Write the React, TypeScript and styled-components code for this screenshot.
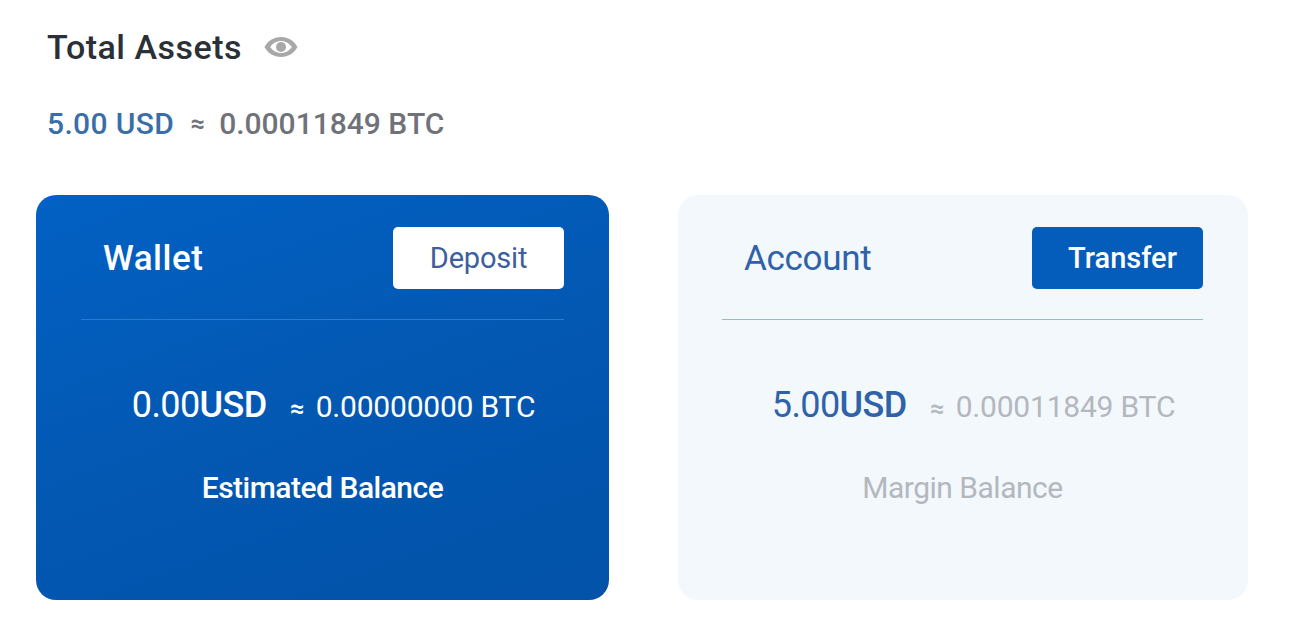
import React from 'react';
import styled, { createGlobalStyle, css } from 'styled-components';

const GlobalStyle = createGlobalStyle`
  html, body {
    margin: 0;
    padding: 0;
    background: #fff;
    font-family: Roboto, "Liberation Sans", sans-serif;
  }
`;

const Page = styled.div`
  width: 1293px;
  height: 630px;
  padding: 28px 0 0 36px;
  box-sizing: border-box;
  overflow: hidden;
`;

const Heading = styled.div`
  display: flex;
  align-items: center;
  gap: 22px;
  padding-left: 11px;
  height: 38px;
`;

const Title = styled.h1`
  margin: 0;
  font-size: 34px;
  font-weight: 500;
  color: #2b2f36;
  letter-spacing: 0.5px;
`;

const Summary = styled.div`
  display: flex;
  align-items: center;
  padding-left: 11px;
  margin-top: 38px;
  height: 38px;
  font-size: 30px;
  font-weight: 500;
  letter-spacing: 0;
`;

const SummaryUsd = styled.span`
  color: #3a6ea8;
  letter-spacing: 0.35px;
`;

const SummaryBtc = styled.span`
  color: #6f7278;
`;

const Approx = styled.span<{ $color: string; $before: number; $after: number }>`
  display: inline-block;
  width: 15px;
  margin: 0 ${({ $after }) => $after}px 0 ${({ $before }) => $before}px;
  text-align: center;
  font-size: 25px;
  font-weight: 700;
  color: ${({ $color }) => $color};
`;

const Cards = styled.div`
  display: flex;
  gap: 69px;
  margin-top: 53px;
`;

const Card = styled.section<{ $primary?: boolean }>`
  width: 573px;
  height: 405px;
  box-sizing: border-box;
  border-radius: 20px;
  padding: 32px 45px 0;
  display: flex;
  flex-direction: column;
  ${({ $primary }) =>
    $primary
      ? css`
          background: linear-gradient(160deg, #0261c4 0%, #0358b2 50%, #0252a8 100%);
          color: #fff;
        `
      : css`
          width: 570px;
          padding-left: 44px;
          background: #f3f8fd;
        `}
`;

const CardHeader = styled.header<{ $primary?: boolean }>`
  display: flex;
  align-items: center;
  justify-content: space-between;
  padding: 0 0 30px 22px;
  border-bottom: 1px solid ${({ $primary }) => ($primary ? '#2c7bcd' : '#8fb4f2')};
`;

const CardTitle = styled.h2<{ $primary?: boolean }>`
  margin: 0;
  font-size: 35px;
  font-weight: ${({ $primary }) => ($primary ? 500 : 400)};
  color: ${({ $primary }) => ($primary ? '#fff' : '#2f62a8')};
  letter-spacing: ${({ $primary }) => ($primary ? '0.5px' : '-0.3px')};
`;

const ActionButton = styled.button<{ $primary?: boolean }>`
  width: 171px;
  height: 62px;
  border: 0;
  border-radius: 5px;
  font-family: inherit;
  font-size: 29px;
  ${({ $primary }) =>
    $primary
      ? css`
          background: #fff;
          color: #3d5f9e;
          letter-spacing: -0.2px;
        `
      : css`
          background: #045cbb;
          color: #fff;
          padding-left: 16px;
          font-weight: 500;
        `}
`;

const BalanceRow = styled.div`
  display: flex;
  align-items: baseline;
  justify-content: center;
  margin-top: 64px;
  padding-left: 22px;
  height: 50px;
`;

const Amount = styled.span<{ $primary?: boolean }>`
  font-size: 36px;
  color: ${({ $primary }) => ($primary ? '#fff' : '#2f62a8')};
  letter-spacing: -0.6px;
`;

const Unit = styled.b`
  font-weight: 500;
`;

const Converted = styled.span<{ $primary?: boolean }>`
  font-size: 30px;
  color: ${({ $primary }) => ($primary ? '#fff' : '#b4b7bd')};
  letter-spacing: -0.2px;
`;

const BalanceLabel = styled.div<{ $primary?: boolean }>`
  margin-top: 36px;
  text-align: center;
  font-size: 30px;
  font-weight: ${({ $primary }) => ($primary ? 500 : 400)};
  color: ${({ $primary }) => ($primary ? '#fff' : '#b4b7bd')};
  letter-spacing: -0.5px;
`;

const EyeIcon = () => (
  <svg width="34" height="22" viewBox="0 0 34 22" aria-hidden="true">
    <path
      fillRule="evenodd"
      fill="#a8a8a8"
      d="M17 1C9.500 1 3.500 5.200 0.500 11 3.500 16.800 9.500 21 17 21s13.500-4.200 16.500-10C30.500 5.200 24.500 1 17 1zm0 4c4.400 0 8.400 2.200 10.800 6-2.400 3.800-6.400 6-10.800 6S8.600 14.800 6.200 11C8.600 7.200 12.600 5 17 5z"
    />
    <circle cx="17" cy="11" r="5" fill="#a8a8a8" />
  </svg>
);

type CardInfo = {
  primary?: boolean;
  title: string;
  action: string;
  amount: string;
  converted: string;
  label: string;
};

const cards: CardInfo[] = [
  {
    primary: true,
    title: 'Wallet',
    action: 'Deposit',
    amount: '0.00',
    converted: '0.00000000 BTC',
    label: 'Estimated Balance',
  },
  {
    title: 'Account',
    action: 'Transfer',
    amount: '5.00',
    converted: '0.00011849 BTC',
    label: 'Margin Balance',
  },
];

export default function App() {
  return (
    <Page>
      <GlobalStyle />
      <Heading>
        <Title>Total Assets</Title>
        <EyeIcon />
      </Heading>
      <Summary>
        <SummaryUsd>5.00 USD</SummaryUsd>
        <Approx $color="#6f7278" $before={16} $after={14}>≈</Approx>
        <SummaryBtc>0.00011849 BTC</SummaryBtc>
      </Summary>
      <Cards>
        {cards.map((card) => (
          <Card key={card.title} $primary={card.primary}>
            <CardHeader $primary={card.primary}>
              <CardTitle $primary={card.primary}>{card.title}</CardTitle>
              <ActionButton $primary={card.primary}>{card.action}</ActionButton>
            </CardHeader>
            <BalanceRow>
              <Amount $primary={card.primary}>
                {card.amount}
                <Unit>USD</Unit>
              </Amount>
              <Approx $color={card.primary ? '#fff' : '#b4b7bd'} $before={23} $after={11}>≈</Approx>
              <Converted $primary={card.primary}>{card.converted}</Converted>
            </BalanceRow>
            <BalanceLabel $primary={card.primary}>{card.label}</BalanceLabel>
          </Card>
        ))}
      </Cards>
    </Page>
  );
}
